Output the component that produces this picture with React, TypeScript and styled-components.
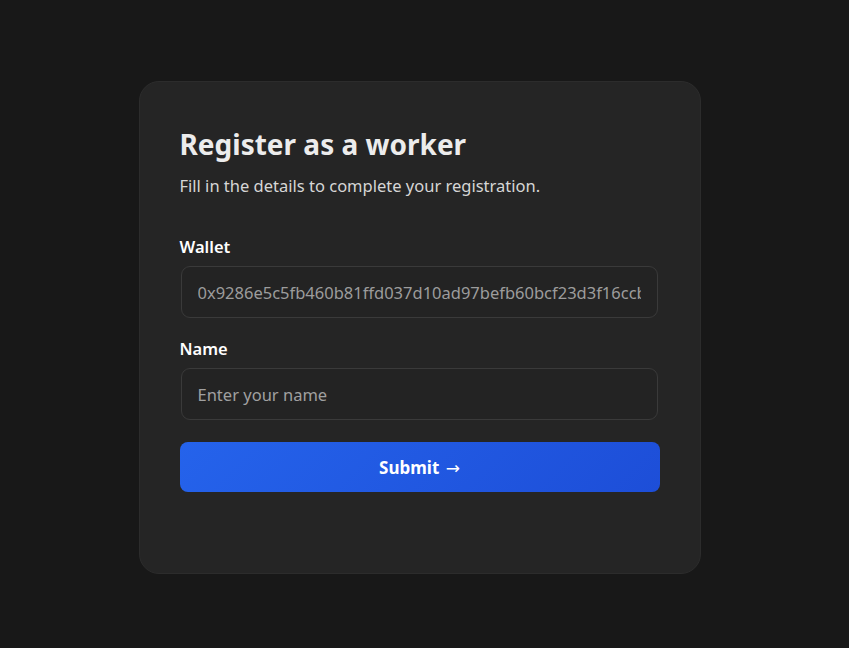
import React, { useState } from "react";
import styled, { createGlobalStyle } from "styled-components";

const GlobalStyle = createGlobalStyle`
  html, body {
    margin: 0;
    padding: 0;
    background: #181818;
    font-family: "Noto Sans", "Open Sans", "Liberation Sans", sans-serif;
  }
  * {
    box-sizing: border-box;
  }
`;

const Page = styled.div`
  min-height: 648px;
  display: flex;
  justify-content: center;
  padding-top: 81px;
  padding-right: 10px;
`;

const Card = styled.form`
  width: 562px;
  height: 493px;
  background: #252525;
  border: 1px solid #2c2c2c;
  border-radius: 20px;
  padding: 44px 40px 40px;
  display: flex;
  flex-direction: column;
`;

const Title = styled.h1`
  margin: 0;
  font-size: 28px;
  line-height: 36px;
  font-weight: 700;
  color: #ececec;
`;

const Subtitle = styled.p`
  margin: 12px 0 0;
  font-size: 16.5px;
  line-height: 24px;
  color: #d6d6d6;
`;

const Field = styled.div<{ $first?: boolean }>`
  display: flex;
  flex-direction: column;
  gap: 8px;
  margin-top: ${(p) => (p.$first ? "38px" : "20px")};
`;

const Label = styled.label`
  font-size: 16.5px;
  line-height: 22px;
  font-weight: 600;
  color: #ffffff;
`;

const Input = styled.input`
  width: 477px;
  height: 52px;
  margin-left: 1px;
  padding: 0 16px;
  background: #232323;
  border: 1px solid #3a3a3a;
  border-radius: 9px;
  font-family: inherit;
  font-size: 16.5px;
  color: #9c9c9c;
  outline: none;

  &::placeholder {
    color: #a0a0a0;
  }
`;

const SubmitButton = styled.button`
  margin-top: 22px;
  width: 480px;
  height: 50px;
  border: none;
  border-radius: 8px;
  background: linear-gradient(135deg, #2563eb, #1d4ed8);
  color: #ffffff;
  font-family: inherit;
  font-size: 17px;
  font-weight: 700;
  cursor: pointer;
`;

const Arrow = styled.span`
  font-family: "DejaVu Sans", sans-serif;
  font-weight: 400;
  font-size: 17px;
  margin-left: 2px;
`;

export default function App() {
  const [name, setName] = useState("");
  const wallet = "0x9286e5c5fb460b81ffd037d10ad97befb60bcf23d3f16ccb";

  return (
    <>
      <GlobalStyle />
      <Page>
        <Card onSubmit={(e) => e.preventDefault()}>
          <Title>Register as a worker</Title>
          <Subtitle>Fill in the details to complete your registration.</Subtitle>
          <Field $first>
            <Label htmlFor="wallet">Wallet</Label>
            <Input id="wallet" value={wallet} readOnly />
          </Field>
          <Field>
            <Label htmlFor="name">Name</Label>
            <Input
              id="name"
              placeholder="Enter your name"
              value={name}
              onChange={(e) => setName(e.target.value)}
            />
          </Field>
          <SubmitButton type="submit">
            Submit <Arrow>→</Arrow>
          </SubmitButton>
        </Card>
      </Page>
    </>
  );
}
